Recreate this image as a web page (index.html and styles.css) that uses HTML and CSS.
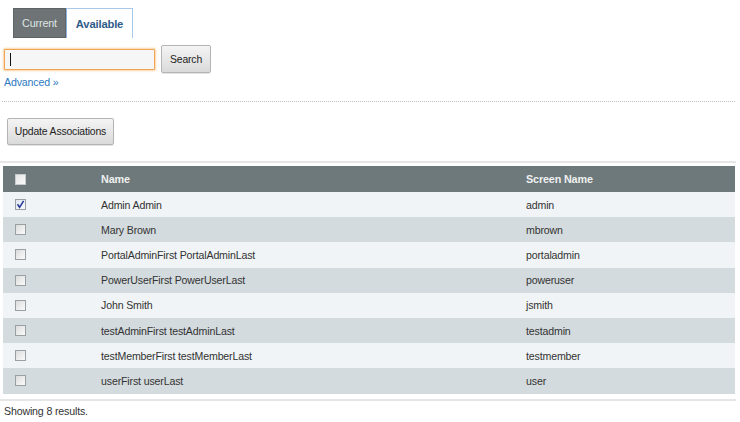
FILE: index.html
```html
<!DOCTYPE html>
<html>
<head>
<meta charset="utf-8">
<link rel="stylesheet" href="styles.css">
</head>
<body>
<div class="tabs">
  <div class="tab tab-current">Current</div>
  <div class="tab tab-available">Available</div>
</div>
<div class="search-row">
  <div class="search-wrap">
    <input class="search-input" type="text" value="">
    <span class="caret"></span>
  </div>
  <button class="btn btn-search">Search</button>
</div>
<a class="advanced" href="#">Advanced &raquo;</a>
<div class="dotted"></div>
<button class="btn btn-update">Update Associations</button>
<div class="sep sep-top"></div>
<table class="grid">
  <colgroup><col class="c-check"><col class="c-name"><col class="c-screen"></colgroup>
  <thead>
    <tr><th><span class="cb cb-head"></span></th><th>Name</th><th>Screen Name</th></tr>
  </thead>
  <tbody>
    <tr class="odd"><td><span class="cb checked"><svg viewBox="0 0 11 11" width="11" height="11"><path d="M2.5 5.2 L4.6 8.3 L8.6 1.8" fill="none" stroke="#2a3c9a" stroke-width="1.6"/></svg></span></td><td>Admin Admin</td><td>admin</td></tr>
    <tr class="even"><td><span class="cb"></span></td><td>Mary Brown</td><td>mbrown</td></tr>
    <tr class="odd"><td><span class="cb"></span></td><td>PortalAdminFirst PortalAdminLast</td><td>portaladmin</td></tr>
    <tr class="even"><td><span class="cb"></span></td><td>PowerUserFirst PowerUserLast</td><td>poweruser</td></tr>
    <tr class="odd"><td><span class="cb"></span></td><td>John Smith</td><td>jsmith</td></tr>
    <tr class="even"><td><span class="cb"></span></td><td>testAdminFirst testAdminLast</td><td>testadmin</td></tr>
    <tr class="odd"><td><span class="cb"></span></td><td>testMemberFirst testMemberLast</td><td>testmember</td></tr>
    <tr class="even"><td><span class="cb"></span></td><td>userFirst userLast</td><td>user</td></tr>
  </tbody>
</table>
<div class="sep sep-bottom"></div>
<div class="results">Showing 8 results.</div>
</body>
</html>
```
FILE: styles.css
```css
* { box-sizing: border-box; }
body {
  margin: 0;
  font-family: "Liberation Sans", Arial, sans-serif;
  font-size: 10.6px;
  letter-spacing: -0.15px;
  color: #333;
  background: #fff;
  width: 740px;
}
.tabs {
  display: flex;
  padding: 8px 0 0 13px;
  height: 38px;
}
.tab {
  height: 30px;
  display: flex;
  align-items: center;
  justify-content: center;
}
.tab-current {
  width: 53px;
  background: #6e7475;
  border: 1px solid #5e6465;
  color: #dfe4e4;
  font-size: 10.8px;
}
.tab-available {
  width: 67px;
  background: #fff;
  border: 1px solid #aac8ea;
  border-bottom: none;
  border-left: 1px solid #8fb2de;
  color: #2f5b88;
  font-weight: bold;
  font-size: 11.2px;
  padding-top: 1px;
}
.search-row {
  display: flex;
  align-items: center;
  margin-top: 7px;
  height: 28px;
  padding-left: 4px;
}
.search-wrap {
  position: relative;
  width: 151px;
  height: 21px;
}
.search-input {
  width: 151px;
  height: 21px;
  margin: 0;
  border: 1px solid #f0a455;
  box-shadow: 0 0 2px 1px #fbd2a4;
  background: #f6f6f6;
  border-radius: 1px;
  outline: none;
  padding: 0 4px;
}
.caret {
  position: absolute;
  left: 6px;
  top: 4px;
  width: 1px;
  height: 13px;
  background: #111;
}
.btn {
  font-family: "Liberation Sans", Arial, sans-serif;
  font-size: 10.4px;
  letter-spacing: -0.15px;
  color: #222;
  background: linear-gradient(#f4f4f4, #dadada);
  border: 1px solid #b4b4b4;
  border-radius: 2px;
  box-shadow: 0 1px 0 #e4e4e4;
  padding: 0;
  margin: 0;
}
.btn-search {
  width: 50px;
  height: 28px;
  margin-left: 6px;
}
.advanced {
  display: block;
  width: max-content;
  margin: 2px 0 0 4px;
  line-height: 14px;
  color: #2b7ac2;
  text-decoration: none;
}
.dotted {
  margin: 12px 5px 0 2px;
  border-top: 1px dotted #bdbdbd;
  height: 1px;
}
.btn-update {
  display: block;
  width: 107px;
  height: 27px;
  margin: 16px 0 0 7px;
}
.sep {
  height: 2px;
  background: #e6e6e6;
  margin-right: 4px;
}
.sep-top { margin-top: 16px; }
.grid {
  margin: 3px 0 0 3px;
  width: 732px;
  border-collapse: collapse;
  table-layout: fixed;
}
.c-check { width: 98px; }
.c-name { width: 425px; }
.grid th {
  background: #6e797b;
  color: #eef0f0;
  font-weight: bold;
  text-align: left;
  height: 26px;
  padding: 0;
  font-size: 10.8px;
}
.grid td {
  height: 25.2px;
  padding: 0;
  color: #333;
}
.grid th:first-child, .grid td:first-child { padding-left: 12px; }
.grid tr.odd td { background: #f0f4f6; }
.grid tr.even td { background: #d4dbde; }
.cb {
  display: block;
  width: 11px;
  height: 11px;
  border: 1px solid #9aa0a1;
  background: linear-gradient(135deg, #dcdcdc, #fbfbfb);
}
.cb svg { display: block; margin: -1px; }
.cb-head {
  border-color: #c9cccc;
  background: linear-gradient(135deg, #e5e5e5, #fafafa);
}
.checked { background: linear-gradient(135deg, #dfe6ee, #fafbfd); }
.sep-bottom { margin-top: 5px; }
.results {
  margin: 3px 0 0 4px;
  line-height: 14px;
  color: #333;
}
```
